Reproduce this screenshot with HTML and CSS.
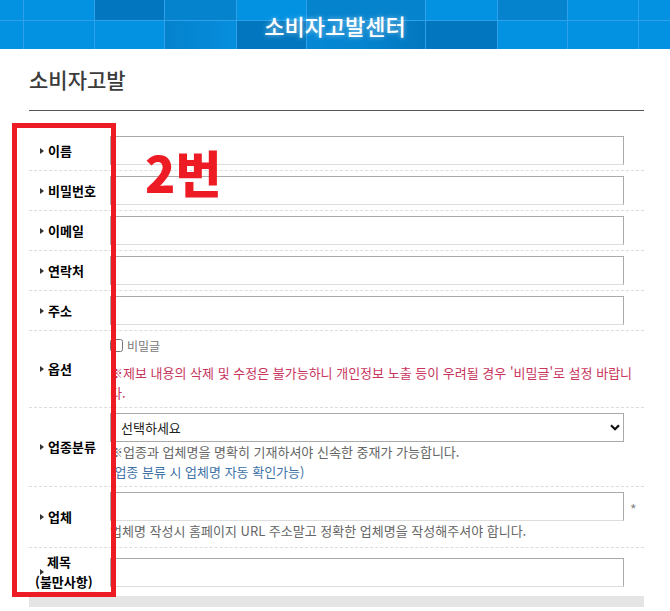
FILE: index.html
```html
<!DOCTYPE html>
<html lang="ko">
<head>
<meta charset="utf-8">
<title>소비자고발</title>
<link rel="stylesheet" href="styles.css">
</head>
<body>
<header class="top">
  <div class="tiles">
    <span class="t l"></span><span class="t l"></span><span class="t d"></span><span class="t m"></span><span class="t l"></span><span class="t m"></span><span class="t l"></span><span class="t m"></span><span class="t l"></span><span class="t l"></span>
    <span class="t l"></span><span class="t l"></span><span class="t l"></span><span class="t g1"></span><span class="t d"></span><span class="t g2"></span><span class="t d"></span><span class="t l"></span><span class="t l"></span><span class="t l"></span>
  </div>
  <h1 class="top-title">소비자고발센터</h1>
</header>

<main class="content">
  <h2 class="page-title">소비자고발</h2>
  <form class="form">
    <div class="row first">
      <div class="label"><i class="tri"></i><span>이름</span></div>
      <div class="field"><input class="inp" type="text"></div>
    </div>
    <div class="row">
      <div class="label"><i class="tri"></i><span>비밀번호</span></div>
      <div class="field"><input class="inp" type="password"></div>
    </div>
    <div class="row">
      <div class="label"><i class="tri"></i><span>이메일</span></div>
      <div class="field"><input class="inp" type="text"></div>
    </div>
    <div class="row">
      <div class="label"><i class="tri"></i><span>연락처</span></div>
      <div class="field"><input class="inp" type="text"></div>
    </div>
    <div class="row">
      <div class="label"><i class="tri"></i><span>주소</span></div>
      <div class="field"><input class="inp" type="text"></div>
    </div>
    <div class="row">
      <div class="label"><i class="tri"></i><span>옵션</span></div>
      <div class="field field-opt">
        <label class="chk"><input type="checkbox">비밀글</label>
        <p class="warn">※제보 내용의 삭제 및 수정은 불가능하니 개인정보 노출 등이 우려될 경우 '비밀글'로 설정 바랍니다.</p>
      </div>
    </div>
    <div class="row">
      <div class="label"><i class="tri"></i><span>업종분류</span></div>
      <div class="field field-help">
        <div class="sel-wrap">
          <select class="sel"><option>선택하세요</option></select>
          <svg class="chev" viewBox="0 0 10 7" width="10" height="7"><path d="M1 1.2 L5 5.2 L9 1.2" fill="none" stroke="#111" stroke-width="2.2"/></svg>
        </div>
        <p class="help">※업종과 업체명을 명확히 기재하셔야 신속한 중재가 가능합니다.</p>
        <p class="help blue">(업종 분류 시 업체명 자동 확인가능)</p>
      </div>
    </div>
    <div class="row">
      <div class="label"><i class="tri"></i><span>업체</span></div>
      <div class="field field-co">
        <div class="inline"><input class="inp" type="text"><span class="req">*</span></div>
        <p class="help">업체명 작성시 홈페이지 URL 주소말고 정확한 업체명을 작성해주셔야 합니다.</p>
      </div>
    </div>
    <div class="row">
      <div class="label two"><i class="tri"></i><span class="lines"><span class="l1">제목</span><span class="l2">(불만사항)</span></span></div>
      <div class="field field-mid"><input class="inp" type="text"></div>
    </div>
    <div class="next-bar"></div>
  </form>
</main>

<div class="annot-box"></div>
<div class="annot-num">2번</div>
</body>
</html>
```

FILE: styles.css
```css
body {
  margin: 0;
  width: 670px;
  height: 611px;
  overflow: hidden;
  position: relative;
  background: #fff;
  color: #222;
  font-family: "Noto Sans CJK KR", "Noto Sans", sans-serif;
}

/* header */
.top {
  display: grid;
  height: 49px;
}
.tiles, .top-title { grid-area: 1 / 1; }
.tiles {
  display: grid;
  grid-template-columns: 23px 70px 69px 71px 69px 118px 71px 69px 70px 1fr;
  grid-template-rows: 20px 28px;
  gap: 1px;
  background: #2ea1ea;
}
.t.l { background: #0391e2; }
.t.d { background: #0277bf; }
.t.m { background: #0583cd; }
.t.g1 { background: linear-gradient(90deg, #0582cc, #068ede); }
.t.g2 { background: linear-gradient(90deg, #0688d6 0%, #0584cf 45%, #0277bf 100%); }
.top-title {
  margin: 0;
  place-self: center;
  font-size: 22px;
  font-weight: 500;
  line-height: 1;
  color: #fff;
  text-shadow: 0 0 5px rgba(255, 255, 255, 0.55);
}

/* content */
.content { padding: 0 26px 0 29px; }
.page-title {
  margin: 15px 0 0;
  padding-bottom: 16px;
  border-bottom: 1px solid #555;
  font-size: 21px;
  line-height: 30px;
  font-weight: 500;
  color: #3c3c3c;
}
.form { margin-top: 19px; }
.row {
  display: flex;
  border-top: 1px dashed #dcdcdc;
}
.row.first { border-top-color: transparent; }
.label {
  width: 81px;
  flex: none;
  display: flex;
  align-items: center;
  padding-left: 11px;
  box-sizing: border-box;
  font-size: 13px;
  font-weight: 700;
  line-height: 20px;
  color: #000;
}
.tri {
  width: 0;
  height: 0;
  border-left: 4px solid #333;
  border-top: 3px solid transparent;
  border-bottom: 3px solid transparent;
  margin-right: 4px;
}
.label.two { padding-top: 4px; padding-bottom: 4px; }
.lines { display: flex; flex-direction: column; white-space: nowrap; }
.l1 { margin-left: -1px; }
.l2 { margin-left: -13px; }

.field { flex: 1; padding: 5px 0; }
.field-opt { padding: 4px 0 4px; }
.field-help { padding: 5px 0 4px; }
.field-co { padding: 5px 0 6px; }
.field-mid { display: flex; align-items: center; padding: 0; }

.inp {
  display: block;
  width: 514px;
  height: 29px;
  box-sizing: border-box;
  margin: 0;
  padding: 0 10px;
  border: 1px solid #aaa;
  border-bottom-color: #ddd;
  background: #fff;
  font: 13px "Noto Sans CJK KR", sans-serif;
}

.chk {
  display: flex;
  align-items: center;
  height: 20px;
  font-size: 12px;
  color: #777;
}
.chk input { margin: 0 4px 0 0; width: 13px; height: 13px; }
.warn {
  margin: 8px 0 0;
  font-size: 13px;
  line-height: 20px;
  color: #c8345c;
}

.sel-wrap { position: relative; width: 514px; height: 29px; }
.sel {
  appearance: none;
  -webkit-appearance: none;
  display: block;
  width: 100%;
  height: 29px;
  margin: 0;
  padding: 0 0 0 10px;
  border: 1px solid #aaa;
  border-radius: 0;
  background: #fff;
  font: 13px "Noto Sans CJK KR", sans-serif;
  color: #222;
}
.chev {
  position: absolute;
  right: 4px;
  top: 11px;
  pointer-events: none;
}

.help {
  margin: 0;
  font-size: 13px;
  line-height: 20px;
  color: #666;
}
.help.blue { color: #3f73a8; }

.inline { display: flex; align-items: center; }
.req {
  margin-left: 6px;
  margin-top: 4px;
  font-size: 14px;
  line-height: 20px;
  color: #888;
}

.next-bar {
  height: 11px;
  background: #e5e5e5;
}

/* annotation overlays */
.annot-box {
  position: absolute;
  left: 12px;
  top: 123px;
  width: 104px;
  height: 474px;
  box-sizing: border-box;
  border: 5px solid #ed1c24;
}
.annot-num {
  position: absolute;
  left: 145px;
  top: 146px;
  font-size: 50px;
  font-weight: 900;
  line-height: 1;
  color: #ed1c24;
}
```
